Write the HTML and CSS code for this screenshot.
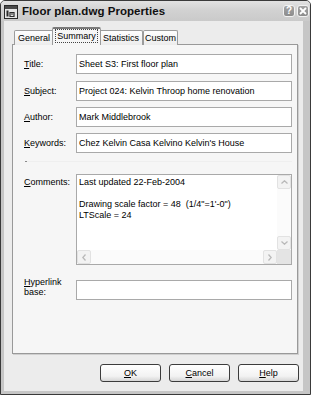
FILE: index.html
```html
<!DOCTYPE html>
<html>
<head>
<meta charset="utf-8">
<title>Floor plan.dwg Properties</title>
<link rel="stylesheet" href="styles.css">
</head>
<body>
<div class="window">
  <div class="titlebar">
    <svg class="app-icon" width="14" height="14" viewBox="0 0 14 14">
      <rect x="0.5" y="0.5" width="13" height="13" fill="#e6e6e6" stroke="#2a2a2a"/>
      <rect x="1" y="1" width="12" height="3" fill="#4a4a4a"/>
      <rect x="2.5" y="5.5" width="2" height="6" fill="#2a2a2a"/>
      <path d="M6 7.5 h4 v4 h-4 z M7 9 h2" fill="none" stroke="#2a2a2a" stroke-width="1.2"/>
    </svg>
    <span class="title">Floor plan.dwg Properties</span>
    <div class="caption-btns">
      <span class="cap-btn">?</span>
      <span class="cap-btn cap-close">
        <svg width="8" height="8" viewBox="0 0 8 8"><path d="M1 1 L7 7 M7 1 L1 7" stroke="#fff" stroke-width="1.8"/></svg>
      </span>
    </div>
  </div>
  <div class="client">
    <div class="tabs">
      <div class="tab tab-general">General</div>
      <div class="tab tab-summary active"><span class="focus">Summary</span></div>
      <div class="tab tab-statistics">Statistics</div>
      <div class="tab tab-custom">Custom</div>
    </div>
    <div class="panel">
      <div class="row row-first">
        <label><u>T</u>itle:</label>
        <div class="field">Sheet S3: First floor plan</div>
      </div>
      <div class="row row-second">
        <label><u>S</u>ubject:</label>
        <div class="field">Project 024: Kelvin Throop home renovation</div>
      </div>
      <div class="row">
        <label><u>A</u>uthor:</label>
        <div class="field">Mark Middlebrook</div>
      </div>
      <div class="row">
        <label><u>K</u>eywords:</label>
        <div class="field">Chez Kelvin Casa Kelvino Kelvin's House</div>
      </div>
      <div class="sep"><span class="sep-end"></span></div>
      <div class="row row-comments">
        <label class="label-comments"><u>C</u>omments:</label>
        <div class="memo">
          <div class="memo-text">Last updated 22-Feb-2004

Drawing scale factor = 48  (1/4"=1'-0")
LTScale = 24</div>
          <div class="vscroll">
            <span class="arrow"><svg width="7" height="4" viewBox="0 0 7 4"><path d="M0.5 3.5 L3.5 0.8 L6.5 3.5" fill="none" stroke="#b9b9b9" stroke-width="1.3"/></svg></span>
            <span class="track"></span>
            <span class="arrow"><svg width="7" height="4" viewBox="0 0 7 4"><path d="M0.5 0.5 L3.5 3.2 L6.5 0.5" fill="none" stroke="#b9b9b9" stroke-width="1.3"/></svg></span>
          </div>
          <div class="hscroll">
            <span class="arrow"><svg width="4" height="7" viewBox="0 0 4 7"><path d="M3.5 0.5 L0.8 3.5 L3.5 6.5" fill="none" stroke="#b9b9b9" stroke-width="1.3"/></svg></span>
            <span class="track"></span>
            <span class="arrow"><svg width="4" height="7" viewBox="0 0 4 7"><path d="M0.5 0.5 L3.2 3.5 L0.5 6.5" fill="none" stroke="#b9b9b9" stroke-width="1.3"/></svg></span>
          </div>
          <div class="corner"></div>
        </div>
      </div>
      <div class="row row-hyper">
        <label class="label-hyper"><u>H</u>yperlink<br>base:</label>
        <div class="field"></div>
      </div>
    </div>
    <div class="buttons">
      <button class="btn"><u>O</u>K</button>
      <button class="btn"><u>C</u>ancel</button>
      <button class="btn"><u>H</u>elp</button>
    </div>
  </div>
</div>
</body>
</html>
```
FILE: styles.css
```css
html, body {
  margin: 0;
  padding: 0;
  background: #ffffff;
}

.window {
  width: 311px;
  height: 395px;
  box-sizing: border-box;
  border: 1px solid #3a3a3a;
  border-radius: 5px 5px 0 0;
  background: #c6c6c6;
  display: flex;
  flex-direction: column;
  font-family: "Liberation Sans", Arial, sans-serif;
  font-size: 9px;
  color: #000;
}

.titlebar {
  height: 20px;
  display: flex;
  align-items: center;
  padding: 0 1px 0 3px;
  background: linear-gradient(#e2e2e2, #d2d2d2 45%, #cacaca);
  border-radius: 4px 4px 0 0;
}

.app-icon {
  flex: none;
  margin-top: 1px;
}

.title {
  margin-left: 4px;
  font-weight: bold;
  font-size: 11.5px;
  color: #101010;
  letter-spacing: 0.05px;
}

.caption-btns {
  margin-left: auto;
  display: flex;
  gap: 2px;
}

.cap-btn {
  width: 12px;
  height: 12px;
  box-sizing: border-box;
  border: 1px solid #f2f2f2;
  border-radius: 3px;
  background: linear-gradient(#a4a4a4, #8c8c8c);
  color: #fff;
  font-weight: bold;
  font-size: 10px;
  line-height: 10px;
  text-align: center;
  display: flex;
  align-items: center;
  justify-content: center;
}

.client {
  flex: 1;
  margin: 0 7px 3px 3px;
  background: #ececec;
  display: flex;
  flex-direction: column;
}

.tabs {
  display: flex;
  align-items: flex-end;
  margin: 6px 0 -1px 10px;
  position: relative;
  z-index: 1;
}

.tab {
  height: 15px;
  box-sizing: border-box;
  border: 1px solid #9c9c9c;
  border-bottom: none;
  border-radius: 2px 2px 0 0;
  background: linear-gradient(#fefefe, #ececec);
  line-height: 14px;
  text-align: center;
  white-space: nowrap;
}

.tab-general { width: 40px; }
.tab-summary { width: 49px; margin: 0 -2px; }
.tab-statistics { width: 44px; }
.tab-custom { width: 35px; }

.tab.active {
  height: 18px;
  background: #f6f6f6;
  border-top: 2px solid #7a7a7a;
  line-height: 15px;
  position: relative;
  z-index: 2;
}

.focus {
  display: inline-block;
  padding: 0 1px;
  line-height: 12px;
  outline: 1px dotted #444;
}

.panel {
  margin-left: 8px;
  width: 286px;
  height: 310px;
  box-sizing: border-box;
  border: 1px solid #999999;
  box-shadow: 1px 1px 0 #cfcfcf;
  background: #f6f6f6;
  padding: 9px 5px 0 11px;
  display: flex;
  flex-direction: column;
}

.row {
  display: grid;
  grid-template-columns: 52px 1fr;
  align-items: center;
  margin-top: 6px;
}

.row-first { margin-top: 0; }
.row-second { margin-top: 7px; }

label {
  white-space: nowrap;
}

.field {
  height: 20px;
  box-sizing: border-box;
  border: 1px solid #a9a9a9;
  background: #ffffff;
  padding: 0 2px;
  line-height: 18px;
  white-space: nowrap;
  overflow: hidden;
}

.sep {
  margin-top: 8px;
  height: 1px;
  margin-left: 1px;
  background: #efefef;
}

.sep-end {
  display: block;
  width: 2px;
  height: 1px;
  background: #8a8a8a;
}

.row-comments {
  margin-top: 12px;
  align-items: start;
}

.label-comments {
  margin-top: 3px;
}

.memo {
  height: 91px;
  box-sizing: border-box;
  border: 1px solid #a9a9a9;
  background: #ffffff;
  display: grid;
  grid-template-columns: 1fr 14px;
  grid-template-rows: 1fr 14px;
}

.memo-text {
  padding: 2px 2px 0;
  white-space: pre;
  line-height: 11px;
  overflow: hidden;
}

.vscroll {
  display: flex;
  flex-direction: column;
  background: #fbfbfb;
}

.hscroll {
  display: flex;
  background: #fbfbfb;
}

.track { flex: 1; }

.arrow {
  flex: none;
  width: 14px;
  height: 14px;
  box-sizing: border-box;
  border: 1px solid #e2e2e2;
  border-radius: 2px;
  background: #f3f3f3;
  display: flex;
  align-items: center;
  justify-content: center;
}

.corner {
  background: #e4e4e4;
}

.row-hyper {
  margin-top: 15px;
  align-items: start;
}

.label-hyper {
  line-height: 10px;
  margin-top: -3px;
}

.buttons {
  display: flex;
  justify-content: flex-end;
  gap: 8px;
  margin-top: 10px;
  padding-right: 4px;
}

.btn {
  width: 61px;
  height: 18px;
  box-sizing: border-box;
  border: 1px solid #3c3c3c;
  border-radius: 3px;
  background: linear-gradient(#ffffff, #f2f2f2 70%, #d6d6d6);
  font-family: "Liberation Sans", Arial, sans-serif;
  font-size: 9px;
  color: #000;
  padding: 0;
  line-height: 16px;
}
```
